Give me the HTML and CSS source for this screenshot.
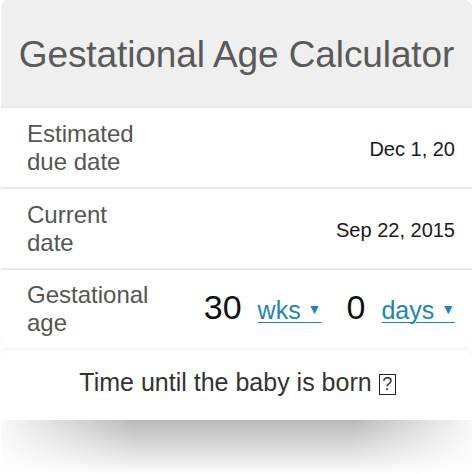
FILE: index.html
```html
<!DOCTYPE html>
<html>
<head>
<meta charset="utf-8">
<link rel="stylesheet" href="styles.css">
</head>
<body>
<div class="page">
  <div class="card">
    <div class="header">Gestational Age Calculator</div>
    <div class="row">
      <div class="label">Estimated<br>due date</div>
      <div class="value">Dec 1, 20</div>
    </div>
    <div class="row">
      <div class="label">Current<br>date</div>
      <div class="value">Sep 22, 2015</div>
    </div>
    <div class="row row-last">
      <div class="label">Gestational<br>age</div>
      <div class="age">
        <span class="num">30</span>
        <span class="unit">wks <span class="tri">▼</span></span>
        <span class="num num2">0</span>
        <span class="unit">days <span class="tri">▼</span></span>
      </div>
    </div>
  </div>
  <div class="result">
    <span class="result-text">Time until the baby is born</span>
    <span class="qbox">?</span>
  </div>
  <div class="shadow"></div>
</div>
</body>
</html>
```
FILE: styles.css
```css
html, body {
  margin: 0;
  padding: 0;
  background: #ffffff;
}
body {
  font-family: "Liberation Sans", Arial, Helvetica, sans-serif;
  width: 474px;
  height: 474px;
  overflow: hidden;
}
.page {
  padding: 0 2px 0 1px;
}
.card {
  background: #e9e9e9;
  border-radius: 8px;
  display: flex;
  flex-direction: column;
  gap: 2px;
  overflow: hidden;
}
.header {
  background: #efefef;
  height: 106px;
  display: flex;
  align-items: center;
  justify-content: center;
  color: #5a5a5a;
  font-size: 37px;
  letter-spacing: -0.1px;
  padding-top: 4px;
  box-sizing: border-box;
}
.row {
  background: #ffffff;
  height: 79px;
  display: flex;
  align-items: center;
  justify-content: space-between;
  padding: 0 17px 0 26px;
}
.row-last {
  height: 78px;
  border-radius: 0 0 8px 8px;
}
.label {
  color: #555555;
  font-size: 24px;
  line-height: 28px;
}
.value {
  color: #1a1a1a;
  font-size: 20px;
  padding-top: 4px;
}
.age {
  display: flex;
  align-items: baseline;
  padding-bottom: 4px;
}
.num {
  color: #111111;
  font-size: 34px;
  margin-right: 16px;
}
.num2 {
  margin-left: 25px;
  margin-right: 16px;
}
.unit {
  color: #2384b6;
  font-size: 25px;
  text-decoration: underline;
  text-decoration-thickness: 1px;
  text-underline-offset: 3px;
}
.tri {
  font-size: 14px;
  position: relative;
  top: -5px;
}
.result {
  background: #ffffff;
  border-radius: 8px 8px 0 0;
  margin-top: 1px;
  height: 71px;
  display: flex;
  align-items: center;
  justify-content: center;
  gap: 7px;
  color: #333333;
  font-size: 25px;
  padding-left: 2px;
  padding-bottom: 4px;
  box-sizing: border-box;
  box-shadow: 0 -1px 0 #eeeeee;
}
.qbox {
  display: inline-flex;
  align-items: center;
  justify-content: center;
  width: 15px;
  height: 19px;
  border: 1.5px solid #222222;
  font-size: 18px;
  line-height: 1;
  margin-top: 3px;
}
.shadow {
  height: 54px;
  background: linear-gradient(to bottom, #b9b9b9 0%, #d4d4d4 40%, #f2f2f2 85%, #ffffff 100%);
  -webkit-mask-image: linear-gradient(to right, rgba(0,0,0,0.1) 0%, #000 28%, #000 75%, rgba(0,0,0,0.1) 100%);
  mask-image: linear-gradient(to right, rgba(0,0,0,0.1) 0%, #000 28%, #000 75%, rgba(0,0,0,0.1) 100%);
}
```
